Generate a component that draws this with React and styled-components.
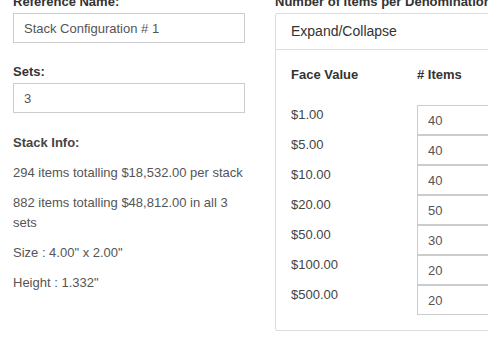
import React from "react";
import styled, { createGlobalStyle } from "styled-components";

const GlobalStyle = createGlobalStyle`
  html, body {
    margin: 0;
    background: #fff;
    overflow: hidden;
  }
  body {
    font-family: "Liberation Sans", Arial, sans-serif;
    font-size: 13px;
    color: #333;
  }
  * { box-sizing: border-box; }
`;

const Page = styled.div`
  display: grid;
  grid-template-columns: 232px 320px;
  column-gap: 30px;
  padding: 0 13px;
  margin-top: -6px;
`;

const Column = styled.div`
  display: flex;
  flex-direction: column;
  min-width: 0;
`;

const FormGroup = styled.div`
  margin-bottom: ${(p) => p.$space || 0}px;
`;

const Label = styled.label`
  display: block;
  font-weight: bold;
  font-size: 13px;
  line-height: 16px;
  margin-bottom: 3px;
  color: #333;
  white-space: nowrap;
`;

const TextInput = styled.input`
  display: block;
  width: 100%;
  height: 30px;
  padding: 0 10px;
  border: 1px solid #ccc;
  border-radius: 0;
  font-family: inherit;
  font-size: 13px;
  color: #555;
  background: #fff;
  outline: none;
`;

const InfoText = styled.p`
  margin: 0 0 10px;
  font-size: 13px;
  line-height: 20px;
  color: ${(p) => (p.$title ? "#444" : "#555")};
  font-weight: ${(p) => (p.$title ? "bold" : "normal")};
`;

const Panel = styled.div`
  border: 1px solid #ddd;
  border-radius: 2px;
  background: #fff;
`;

const PanelHeading = styled.div`
  padding: 7px 15px 8px;
  font-size: 14px;
  line-height: 20px;
  color: #333;
  border-bottom: 1px solid #ddd;
  cursor: pointer;
`;

const PanelBody = styled.div`
  padding: 15px;
`;

const DenomGrid = styled.div`
  display: grid;
  grid-template-columns: 126px 1fr;
`;

const HeadCell = styled.div`
  height: 40px;
  font-weight: bold;
  font-size: 13px;
  line-height: 20px;
  color: #333;
`;

const FaceCell = styled.div`
  height: 30px;
  font-size: 13px;
  line-height: 20px;
  color: #444;
`;

const denominations = [
  ["$1.00", 40],
  ["$5.00", 40],
  ["$10.00", 40],
  ["$20.00", 50],
  ["$50.00", 30],
  ["$100.00", 20],
  ["$500.00", 20],
];

const App = () => {
  return (
    <>
      <GlobalStyle />
      <Page>
        {/* Left: reference + stack info */}
        <Column>
          <FormGroup $space={21}>
            <Label>Reference Name:</Label>
            <TextInput defaultValue="Stack Configuration # 1" />
          </FormGroup>
          <FormGroup $space={20}>
            <Label>Sets:</Label>
            <TextInput defaultValue="3" />
          </FormGroup>
          <div>
            <InfoText $title>Stack Info:</InfoText>
            <InfoText>294 items totalling $18,532.00 per stack</InfoText>
            <InfoText>882 items totalling $48,812.00 in all 3 sets</InfoText>
            <InfoText>Size : 4.00" x 2.00"</InfoText>
            <InfoText>Height : 1.332"</InfoText>
          </div>
        </Column>

        {/* Right: denominations panel */}
        <Column>
          <Label>Number of Items per Denomination</Label>
          <Panel>
            <PanelHeading>Expand/Collapse</PanelHeading>
            <PanelBody>
              <DenomGrid>
                <HeadCell>Face Value</HeadCell>
                <HeadCell># Items</HeadCell>
                {denominations.map(([face, count]) => (
                  <React.Fragment key={face}>
                    <FaceCell>{face}</FaceCell>
                    <TextInput defaultValue={count} />
                  </React.Fragment>
                ))}
              </DenomGrid>
            </PanelBody>
          </Panel>
        </Column>
      </Page>
    </>
  );
};

export default App;
